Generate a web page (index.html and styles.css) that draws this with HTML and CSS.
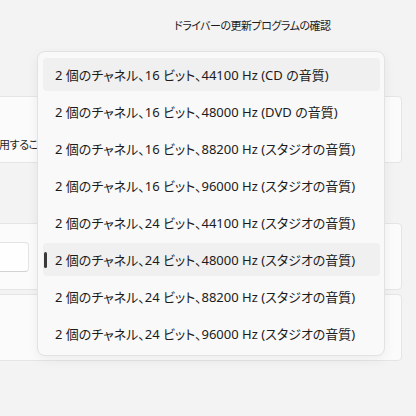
FILE: index.html
```html
<!DOCTYPE html>
<html lang="ja">
  <head>
    <meta charset="UTF-8" />
    <meta name="viewport" content="width=device-width, initial-scale=1.0" />
    <title>サウンドのプロパティ</title>
    <link rel="stylesheet" href="styles.css">
  </head>
  <body>
    <div class="page">
      <div class="top-link">ドライバーの更新プログラムの確認</div>

      <div class="settings">
        <div class="card card-desc">
          <p class="desc">用することを許可する</p>
        </div>

        <div class="card card-input">
          <div class="input-box"></div>
        </div>

        <div class="card card-plain"></div>
      </div>
    </div>

    <!-- format dropdown, open over the settings -->
    <div class="dropdown">
      <div class="option hover">2 個のチャネル、16 ビット、44100 Hz (CD の音質)</div>
      <div class="option">2 個のチャネル、16 ビット、48000 Hz (DVD の音質)</div>
      <div class="option">2 個のチャネル、16 ビット、88200 Hz (スタジオの音質)</div>
      <div class="option">2 個のチャネル、16 ビット、96000 Hz (スタジオの音質)</div>
      <div class="option">2 個のチャネル、24 ビット、44100 Hz (スタジオの音質)</div>
      <div class="option selected">2 個のチャネル、24 ビット、48000 Hz (スタジオの音質)</div>
      <div class="option">2 個のチャネル、24 ビット、88200 Hz (スタジオの音質)</div>
      <div class="option">2 個のチャネル、24 ビット、96000 Hz (スタジオの音質)</div>
    </div>
  </body>
</html>
```

FILE: styles.css
```css
body {
  margin: 0;
  background-color: #f3f3f3;
  font-family: "Noto Sans", "Noto Sans CJK JP", sans-serif;
  font-feature-settings: "palt";
  color: #1b1b1b;
  overflow: hidden;
}
.page {
  display: flex;
  flex-direction: column;
}
.top-link {
  height: 50px;
  line-height: 52px;
  padding-left: 174px;
  font-size: 11px;
  letter-spacing: -0.5px;
}
.settings {
  display: flex;
  flex-direction: column;
  width: 414px;
  margin-left: -12px;
  margin-top: 46px;
}
.card {
  box-sizing: border-box;
  height: 67px;
  background-color: #fbfbfb;
  border: 1px solid #e5e5e5;
  border-radius: 4px;
}
.card-desc {
  display: flex;
  flex-direction: column;
  justify-content: flex-end;
  padding: 0 0 9px 10px;
}
.desc {
  margin: 0;
  font-size: 11px;
  line-height: 16px;
  letter-spacing: -0.4px;
  color: #262626;
}
.card-input {
  margin-top: 60px;
  padding-top: 18px;
}
.input-box {
  box-sizing: border-box;
  width: 40px;
  height: 30px;
  background-color: #fefefe;
  border: 1px solid #e3e3e3;
  border-bottom-color: #d2d2d2;
  border-radius: 4px;
}
.card-plain {
  margin-top: 4px;
}
.dropdown {
  position: absolute;
  top: 51px;
  left: 37px;
  width: 348px;
  height: 305px;
  box-sizing: border-box;
  padding: 6px 4px 5px 5px;
  display: flex;
  flex-direction: column;
  gap: 4px;
  background-color: #f9f9f9;
  border: 1px solid #e2e2e2;
  border-radius: 8px;
  box-shadow: 0 4px 12px rgba(0, 0, 0, 0.06);
}
.option {
  position: relative;
  height: 33px;
  display: flex;
  align-items: center;
  padding-left: 12px;
  border-radius: 4px;
  font-size: 13px;
  white-space: nowrap;
}
.option.hover,
.option.selected {
  background-color: #f0f0f0;
}
.option.selected::before {
  content: "";
  position: absolute;
  left: 1px;
  top: 9px;
  width: 3px;
  height: 16px;
  border-radius: 2px;
  background-color: #3a3a3a;
}
```
